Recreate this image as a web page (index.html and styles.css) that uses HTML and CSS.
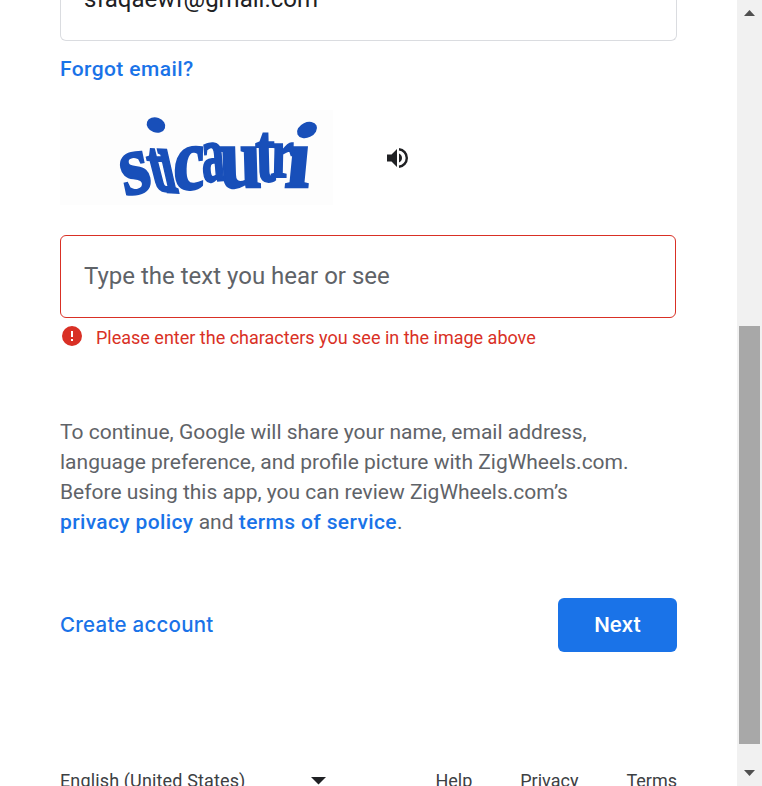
FILE: index.html
```
<!DOCTYPE html>
<html lang="en">
<head>
<meta charset="utf-8">
<title>Sign in</title>
<link rel="stylesheet" href="styles.css">
</head>
<body>
<main class="page">
  <div class="email-field"><span class="email">sfaqaewf@gmail.com</span></div>
  <a class="link forgot">Forgot email?</a>
  <div class="captcha-row">
    <svg class="captcha" width="273" height="95" viewBox="60 110 273 95" role="img">
      <g class="captcha-letters">
        <text transform="matrix(1.75 -.4 .42 2 125 196)">s</text>
        <text transform="matrix(1.2 .08 .45 1.75 154 190)">t</text>
        <text transform="matrix(1.15 .05 .5 2.2 166 192)">ı</text>
        <text transform="matrix(1.65 -.2 -.04 2.100 173 191)">c</text>
        <text transform="matrix(1.1 -.1 .16 1.9 203 182)">a</text>
        <text transform="matrix(1.8 0 .06 2.05 220 187)">u</text>
        <text transform="matrix(1.4 0 .05 2 256 181)">t</text>
        <text transform="matrix(1.25 0 -.04 1.7 270 177)">r</text>
        <text transform="matrix(2.1 0 -.2 2.05 284 187)">ı</text>
      </g>
      <ellipse cx="156" cy="125" rx="9.500" ry="7.500" transform="rotate(20 156 125)"/>
      <ellipse cx="307" cy="130" rx="10.500" ry="7.500" transform="rotate(-25 307 130)"/>
    </svg>
    <svg class="speaker" width="22" height="20" viewBox="0 0 22 20"><path d="M0 6.500v7h4.500l5.500 5.500V1L4.500 6.500zM12 5.500v9c1.800-.8 3-2.500 3-4.500s-1.200-3.700-3-4.500z"/><path class="wave" d="M12 1.300c4.500.5 7.800 4.200 7.800 8.700s-3.300 8.200-7.800 8.700"/></svg>
  </div>
  <div class="answer-field"><span class="placeholder">Type the text you hear or see</span></div>
  <div class="error">
    <svg class="error-icon" width="24" height="24" viewBox="0 0 24 24"><path d="M12 2a10 10 0 1 0 0 20 10 10 0 0 0 0-20zm1 15h-2v-2h2v2zm0-4h-2V7h2v6z"/></svg>
    <span class="error-text">Please enter the characters you see in the image above</span>
  </div>
  <p class="consent">
    To continue, Google will share your name, email address,<br>
    language preference, and profile picture with ZigWheels.com.<br>
    Before using this app, you can review ZigWheels.com’s<br>
    <a class="link">privacy policy</a> and <a class="link">terms of service</a>.
  </p>
  <div class="actions">
    <a class="create">Create account</a>
    <button class="next">Next</button>
  </div>
  <footer class="footer">
    <div class="language"><span>English (United States)</span><svg width="15" height="8" viewBox="0 0 15 8"><path d="M0 0h15L7.500 7.500z"/></svg></div>
    <nav class="links"><a>Help</a><a>Privacy</a><a>Terms</a></nav>
  </footer>
</main>
<aside class="scrollbar">
  <svg class="arrow" width="11" height="6" viewBox="0 0 11 6"><path d="M0 6h11L5.500 0z"/></svg>
  <div class="thumb"></div>
  <svg class="arrow" width="11" height="6" viewBox="0 0 11 6"><path d="M0 0h11L5.500 6z"/></svg>
</aside>
</body>
</html>
```
FILE: styles.css
```
* { box-sizing: border-box; }
body {
  margin: 0;
  width: 762px;
  height: 786px;
  display: flex;
  overflow: hidden;
  background: #fff;
  color: #5f6368;
  font-family: Roboto, sans-serif;
}
.page { width: 737px; height: 786px; padding: 0 60px; overflow: hidden; }
.email-field {
  display: flex;
  align-items: flex-start;
  height: 41px;
  width: 617px;
  padding-left: 23px;
  border: 1px solid #dadce0;
  border-top: 0;
  border-radius: 0 0 6px 6px;
}
.email { margin-top: -19px; font-size: 24px; line-height: 36px; color: #202124; }
.link { color: #1a73e8; font-weight: 500; letter-spacing: .4px; }
.forgot { display: block; margin-top: 13px; font-size: 21px; line-height: 30px; }
.captcha-row { display: flex; align-items: flex-start; margin-top: 26px; }
.captcha { background: #fdfdfd; fill: #184fb9; overflow: visible; }
.captcha-letters {
  font-family: "Liberation Serif", serif;
  font-weight: 700;
  font-size: 42px;
  stroke: #184fb9;
  stroke-width: 1.2px;
}
.speaker { margin: 38px 0 0 54px; fill: #202124; overflow: visible; }
.speaker .wave { fill: none; stroke: #202124; stroke-width: 2.4px; }
.answer-field {
  width: 616px;
  height: 83px;
  margin-top: 30px;
  padding-left: 23px;
  border: 1px solid #d93025;
  border-radius: 6px;
  display: flex;
  align-items: center;
}
.placeholder { font-size: 24px; line-height: 36px; margin-top: -1px; }
.error { display: flex; align-items: center; margin-top: 6px; height: 26px; color: #d93025; }
.error-icon { fill: #d93025; margin-top: -2px; }
.error-text { font-size: 18px; line-height: 26px; margin: 2px 0 0 12px; }
.consent { margin: 67px 0 0; font-size: 21px; line-height: 30px; white-space: nowrap; }
.consent .link { letter-spacing: .37px; }
.actions { display: flex; justify-content: space-between; align-items: center; width: 617px; margin-top: 61px; }
.create { margin-top: -2px; font-family: Inter, sans-serif; font-weight: 500; font-size: 20.5px; letter-spacing: .25px; color: #1a73e8; }
.next {
  width: 119px;
  height: 54px;
  padding: 0 0 1px;
  border: 0;
  border-radius: 6px;
  background: #1a73e8;
  color: #fff;
  font: 600 20.5px Inter, sans-serif;
}
.footer { display: flex; justify-content: space-between; width: 617px; margin-top: 116px; font-size: 18px; line-height: 26px; color: #3c4043; white-space: nowrap; }
.language { display: flex; justify-content: space-between; width: 266px; letter-spacing: .14px; }
.language svg { margin-top: 9px; fill: #202124; }
.links { display: flex; gap: 48px; }
.scrollbar { width: 25px; height: 786px; padding: 10px 2px; display: flex; flex-direction: column; align-items: center; background: #f1f1f1; }
.arrow { fill: #505050; }
.thumb { width: 21px; height: 418px; margin: 310px 0 26px; background: #a8a8a8; flex: none; }
```
